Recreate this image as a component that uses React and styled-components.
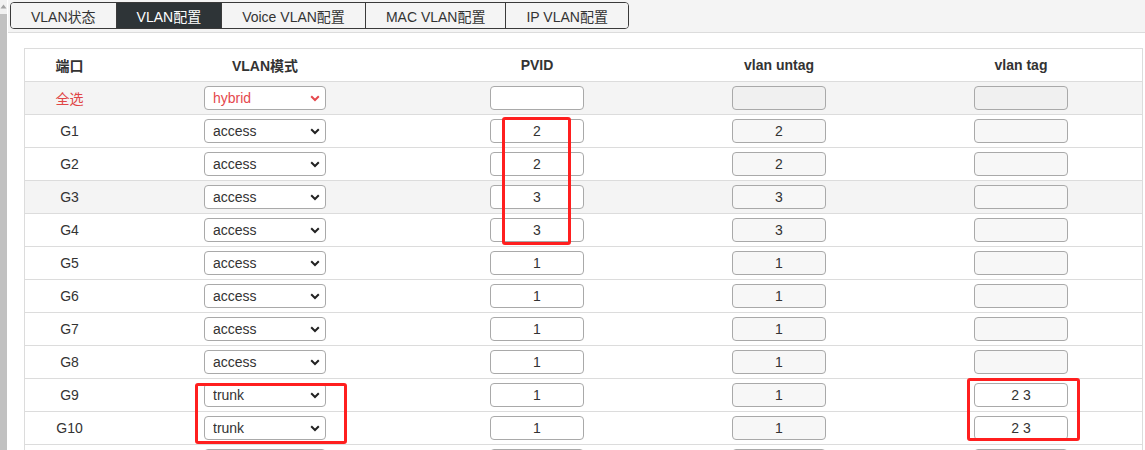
import React from "react";
import styled, { createGlobalStyle } from "styled-components";

const GlobalStyle = createGlobalStyle`
  html, body {
    margin: 0;
    padding: 0;
    background: #fff;
    overflow: hidden;
  }
  body {
    font-family: "Liberation Sans", "Noto Sans CJK SC", sans-serif;
    font-size: 14px;
    color: #333;
  }
`;

const Page = styled.div`
  position: relative;
  display: flex;
  height: 450px;
  overflow: hidden;
`;

const Scrollbar = styled.div`
  width: 7px;
  margin-right: 1px;
  flex-shrink: 0;
  display: flex;
  flex-direction: column;
`;

const ScrollArrow = styled.div`
  height: 14px;
  background: #f1f1f1;
  display: flex;
  justify-content: center;
  padding-top: 4px;
  box-sizing: border-box;
`;

const ScrollThumb = styled.div`
  flex: 1;
  background: #c1c1c1;
`;

const Main = styled.div`
  flex: 1;
  min-width: 0;
`;

const TabBar = styled.div`
  height: 32px;
  background: #f4f4f4;
  border-bottom: 1px solid #dcdcdc;
  padding: 2px 0 0 2px;
  box-sizing: content-box;
  box-sizing: border-box;
  height: 33px;
`;

const Tabs = styled.div`
  display: inline-flex;
  height: 27px;
  border: 1px solid #3a3a3a;
  border-radius: 4px;
  overflow: hidden;
  box-sizing: border-box;
`;

const Tab = styled.div`
  display: flex;
  align-items: center;
  padding: 0 20px;
  font-size: 14px;
  background: ${(p) => (p.$active ? "#2e3437" : "#f4f4f4")};
  color: ${(p) => (p.$active ? "#fff" : "#333")};
  & + & {
    border-left: 1px solid #3a3a3a;
  }
`;

const Content = styled.div`
  padding: 15px 2px 0 16px;
`;

const Table = styled.div`
  border: 1px solid #dcdcdc;
`;

const Row = styled.div`
  display: grid;
  grid-template-columns: 89px 302px 242px 242px 1fr;
  height: 32px;
  background: ${(p) => (p.$shaded ? "#f4f4f4" : "#fff")};
  & + & {
    border-top: 1px solid #dcdcdc;
  }
`;

const Cell = styled.div`
  display: flex;
  align-items: center;
  justify-content: center;
  font-weight: ${(p) => (p.$head ? "bold" : "normal")};
  color: ${(p) => (p.$red ? "#e04646" : "#333")};
`;

const SelectBox = styled.div`
  position: relative;
  display: inline-flex;
`;

const Select = styled.select`
  appearance: none;
  width: 122px;
  height: 24px;
  padding: 0 0 0 8px;
  border: 1px solid #a9a9a9;
  border-radius: 4px;
  background: #fff;
  font-family: inherit;
  font-size: 14px;
  color: ${(p) => (p.$red ? "#e5484d" : "#333")};
  outline: none;
`;

const Chevron = styled.svg`
  position: absolute;
  right: 6px;
  top: 9px;
  pointer-events: none;
`;

const Input = styled.input`
  width: 94px;
  height: 24px;
  box-sizing: border-box;
  border: 1px solid #a9a9a9;
  border-radius: 4px;
  background: ${(p) => (p.disabled ? "#f7f7f7" : "#fff")};
  text-align: center;
  font-family: inherit;
  font-size: 14px;
  color: #333;
  padding: 0;
  outline: none;
`;

const Mark = styled.div`
  position: absolute;
  border: 3px solid #ff1f1f;
  border-radius: 3px;
  box-sizing: border-box;
  pointer-events: none;
`;

const rows = [
  { port: "G1", mode: "access", pvid: "2", untag: "2", tag: "" },
  { port: "G2", mode: "access", pvid: "2", untag: "2", tag: "" },
  { port: "G3", mode: "access", pvid: "3", untag: "3", tag: "", shaded: true },
  { port: "G4", mode: "access", pvid: "3", untag: "3", tag: "" },
  { port: "G5", mode: "access", pvid: "1", untag: "1", tag: "" },
  { port: "G6", mode: "access", pvid: "1", untag: "1", tag: "" },
  { port: "G7", mode: "access", pvid: "1", untag: "1", tag: "" },
  { port: "G8", mode: "access", pvid: "1", untag: "1", tag: "" },
  { port: "G9", mode: "trunk", pvid: "1", untag: "1", tag: "2 3" },
  { port: "G10", mode: "trunk", pvid: "1", untag: "1", tag: "2 3" },
  { port: "G11", mode: "access", pvid: "1", untag: "1", tag: "" },
];

function ModeSelect({ value, red }) {
  const c = red ? "#e5484d" : "#222";
  return (
    <SelectBox>
      <Select $red={red} defaultValue={value}>
        <option value="access">access</option>
        <option value="trunk">trunk</option>
        <option value="hybrid">hybrid</option>
      </Select>
      <Chevron width="10" height="7" viewBox="0 0 10 7">
        <path d="M1.2 1.3 L5 5 L8.8 1.3" fill="none" stroke={c} strokeWidth="2" />
      </Chevron>
    </SelectBox>
  );
}

export default function App() {
  const tabs = ["VLAN状态", "VLAN配置", "Voice VLAN配置", "MAC VLAN配置", "IP VLAN配置"];
  return (
    <Page>
      <GlobalStyle />
      <Scrollbar>
        <ScrollArrow>
          <svg width="7" height="5" viewBox="0 0 7 5">
            <path d="M3.5 0.5 L6.5 4.5 L0.5 4.5 Z" fill="#a3a3a3" />
          </svg>
        </ScrollArrow>
        <ScrollThumb />
      </Scrollbar>
      <Main>
        <TabBar>
          <Tabs>
            {tabs.map((t, i) => (
              <Tab key={t} $active={i === 1}>
                {t}
              </Tab>
            ))}
          </Tabs>
        </TabBar>
        <Content>
          <Table>
            <Row>
              <Cell $head>端口</Cell>
              <Cell $head>VLAN模式</Cell>
              <Cell $head>PVID</Cell>
              <Cell $head>vlan untag</Cell>
              <Cell $head>vlan tag</Cell>
            </Row>
            <Row $shaded>
              <Cell $red>全选</Cell>
              <Cell>
                <ModeSelect value="hybrid" red />
              </Cell>
              <Cell>
                <Input defaultValue="" />
              </Cell>
              <Cell>
                <Input disabled defaultValue="" style={{ background: "#f0f0f0" }} />
              </Cell>
              <Cell>
                <Input disabled defaultValue="" style={{ background: "#f0f0f0" }} />
              </Cell>
            </Row>
            {rows.map((r) => (
              <Row key={r.port} $shaded={r.shaded}>
                <Cell>{r.port}</Cell>
                <Cell>
                  <ModeSelect value={r.mode} />
                </Cell>
                <Cell>
                  <Input defaultValue={r.pvid} />
                </Cell>
                <Cell>
                  <Input disabled defaultValue={r.untag} />
                </Cell>
                <Cell>
                  <Input disabled={r.mode === "access"} defaultValue={r.tag} />
                </Cell>
              </Row>
            ))}
          </Table>
        </Content>
      </Main>
      <Mark style={{ left: 502, top: 117, width: 69, height: 128 }} />
      <Mark style={{ left: 195, top: 383, width: 152, height: 61 }} />
      <Mark style={{ left: 967, top: 378, width: 113, height: 63 }} />
    </Page>
  );
}
